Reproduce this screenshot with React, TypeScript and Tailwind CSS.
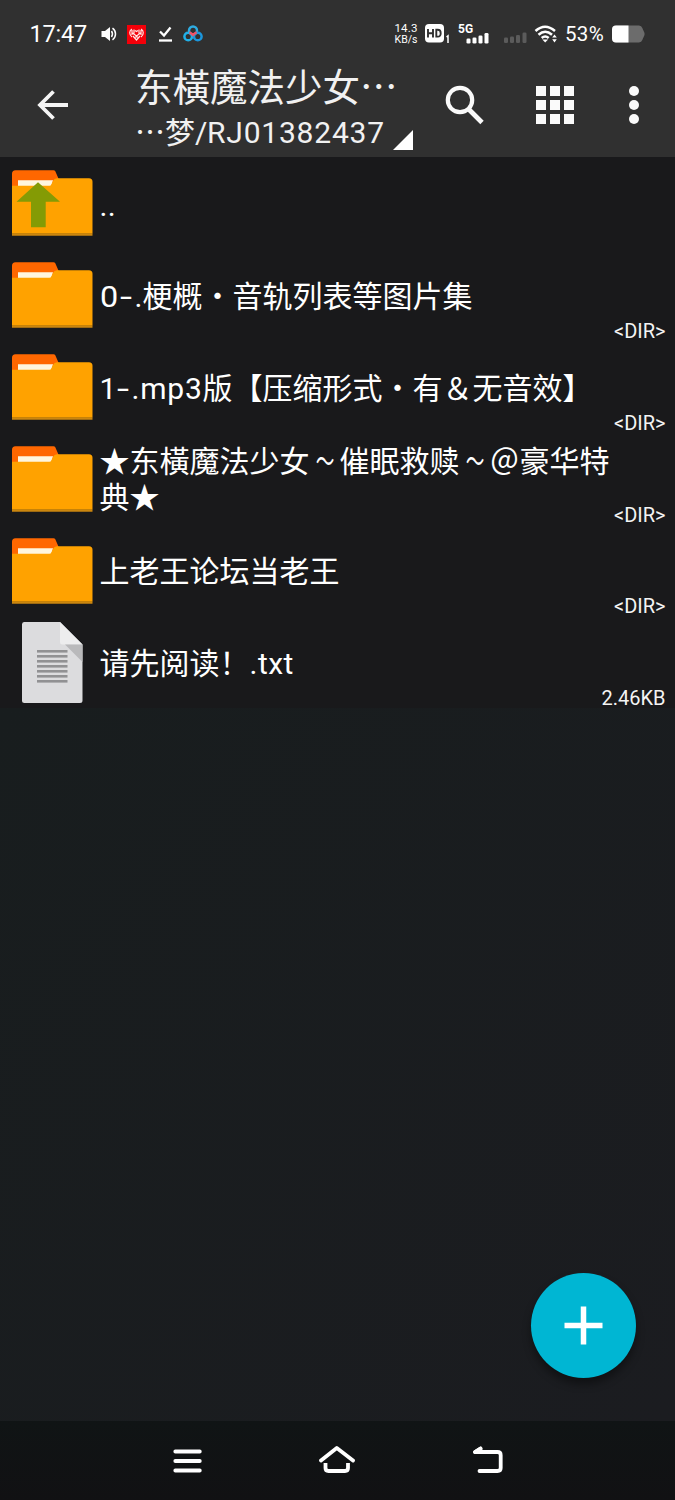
import React from "react";

type Segment = { text: string; className?: string };
type Entry = { lines: Segment[][]; icon: "up" | "folder" | "file"; info?: string; textClass?: string };

const latin = "font-['Roboto','Noto_Sans_CJK_SC',sans-serif]";

const entries: Entry[] = [
  { icon: "up", textClass: "pt-[4px]", lines: [[{ text: "..", className: `${latin} tracking-[0.3px]` }]] },
  {
    icon: "folder",
    info: "<DIR>",
    textClass: "pt-px",
    lines: [[
      { text: "0", className: `${latin} inline-block w-[20px] scale-x-[1.08] origin-left` },
      { text: "-", className: `${latin} inline-block w-[15px] scale-x-[1.45] origin-left` },
      { text: ".", className: `${latin} inline-block w-[8px]` },
      { text: "梗概・音轨列表等图片集" },
    ]],
  },
  {
    icon: "folder",
    info: "<DIR>",
    textClass: "pt-px",
    lines: [[
      { text: "1", className: `${latin} inline-block w-[17px]` },
      { text: "-", className: `${latin} inline-block w-[15px] scale-x-[1.45] origin-left` },
      { text: ".mp3", className: `${latin} inline-block w-[71px] tracking-[0.8px]` },
      { text: "版【压缩形式・有＆无音效】" },
    ]],
  },
  {
    icon: "folder",
    info: "<DIR>",
    textClass: "pb-[3px]",
    lines: [
      [
        { text: "★东橫魔法少女" },
        { text: "～", className: "inline-block scale-x-[0.62]" },
        { text: "催眠救赎" },
        { text: "～", className: "inline-block scale-x-[0.62]" },
        { text: "＠豪华特" },
      ],
      [{ text: "典★" }],
    ],
  },
  { icon: "folder", info: "<DIR>", textClass: "pb-[4px]", lines: [[{ text: "上老王论坛当老王" }]] },
  {
    icon: "file",
    info: "2.46KB",
    textClass: "pb-0",
    lines: [[{ text: "请先阅读！" }, { text: ".txt", className: `${latin} tracking-[0.5px]` }]],
  },
];

function FolderIcon({ up }: { up?: boolean }) {
  return (
    <svg width="81" height="81" viewBox="0 -0.700 81 81" className="block">
      <path d="M0 11a3.500 3.500 0 0 1 3.500-3.500H41.500a2 2 0 0 1 1.800 1.100L47 17v12H0z" fill="#ff6700" />
      <path d="M6 17.500H41l-1.800 6H6z" fill="#fff6de" />
      <path d="M0 23H37.500a2 2 0 0 0 1.800-1.200L41 18.200a4.500 4.500 0 0 1 4.100-2.700H77a3.500 3.500 0 0 1 3.500 3.500V71H0z" fill="#ffa200" />
      <path d="M0 71H80.500v2H0z" fill="#cb860f" />
      {up && <path d="M26 19.500 48 39H33.700V64.500H19V39H4.500z" fill="#849b05" />}
    </svg>
  );
}

function FileIcon() {
  return (
    <svg width="81" height="81" viewBox="0 0 81 81" className="block">
      <path d="M12 0H48L70.500 22.500V78.500a2.500 2.500 0 0 1-2.500 2.500H12.500a2.500 2.500 0 0 1-2.500-2.500V2.500A2.500 2.500 0 0 1 12 0z" fill="#dcdcde" />
      <path d="M48 0 70.500 22.500H50.500A2.500 2.500 0 0 1 48 20z" fill="#ededee" />
      <path d="M53 22.500H70.500V40z" fill="#b9b9bb" />
      {[28, 33, 38, 43, 48, 53, 58].map((y) => (
        <path key={y} d={`M25 ${y}H55.500v2.600H25z`} fill="#919193" />
      ))}
    </svg>
  );
}

function Row({ entry }: { entry: Entry }) {
  return (
    <li className="flex h-[91.9px] items-center pl-3 pr-[9.500px]">
      {entry.icon === "file" ? <FileIcon /> : <FolderIcon up={entry.icon === "up"} />}
      <div className={`ml-[6.500px] w-[515px] shrink-0 whitespace-nowrap text-[30px] leading-9 text-white ${entry.textClass ?? ""}`}>
        {entry.lines.map((line, i) => (
          <div key={i}>
            {line.map((s, j) => (
              <span key={j} className={s.className}>{s.text}</span>
            ))}
          </div>
        ))}
      </div>
      {entry.info && (
        <span className={`${latin} -mb-[2px] -ml-10 flex-1 self-end text-right text-[20px] leading-6 text-[#f4f4f4]`}>
          {entry.info}
        </span>
      )}
    </li>
  );
}

function StatusBar() {
  return (
    <div className={`${latin} flex h-[53px] items-center pl-[29.500px] pr-[30px] pt-[15px] text-white`}>
      <span className="w-[58px] text-[23.500px] leading-6 tracking-[-0.2px]">17:47</span>
      <svg width="16" height="16" viewBox="0 0 16 16" className="ml-[13.500px]">
        <path d="M.5 5h3.500l5-4v14l-5-4H.5z" fill="#fff" />
        <path d="M10.500 5q2 3 0 6M11.500 2.200c4 3 4 8.600 0 11.600" fill="none" stroke="#fff" strokeWidth="1.500" />
      </svg>
      <svg width="19" height="19" viewBox="0 0 19 19" className="ml-[10px]">
        <path d="M0 0h19v19H0z" fill="#f40009" />
        <path d="M5 4C2 5.500 2 10 5 12M14 4c3 1.500 3 6 0 8M7 4.500v4M12 4.500v4M5.500 8l4 3 4-3M6 11l3.500 4 3.500-4M8 5.500l1.500 1L11 5.500M5 5v5M14 5v5M8 12h3" fill="none" stroke="#ffe8e6" strokeWidth="1.200" />
      </svg>
      <svg width="15" height="17" viewBox="0 0 15 17" className="ml-[11.500px]">
        <path d="m2 5.500 4 4 6.500-8" fill="none" stroke="#fff" strokeWidth="2.300" />
        <path d="M1 14.500h13" stroke="#fff" strokeWidth="2.300" />
      </svg>
      <svg width="20" height="18" viewBox="0 0 20 18" className="ml-[10px]" fill="none" strokeWidth="2.500">
        <circle cx="10" cy="5.500" r="4" stroke="#2eabe0" />
        <circle cx="5.200" cy="11.500" r="3.800" stroke="#20b0e8" />
        <circle cx="14.800" cy="11.500" r="3.800" stroke="#1b96dc" />
        <path d="M6.300 7.500c1.700.3 2.500 1.200 3.700 2.500 1.200-1.300 2-2.200 3.700-2.500" stroke="#ef5266" />
      </svg>
      <div className="ml-auto w-[24px] text-center text-[10.500px] leading-[11px]">
        <div className="text-[11.500px] tracking-[0.2px]">14.3</div>
        <div>KB/s</div>
      </div>
      <svg width="25" height="22" viewBox="0 0 25 22" className="ml-[7px]">
        <rect x="0" y="1" width="19" height="18.500" rx="4" fill="#fff" />
        <path d="M3 6v8.500M8 6v8.500M3 10.200h5M11.300 6.800h1.500q2.900 0 2.900 3.400t-2.900 3.400h-1.500z" fill="none" stroke="#303030" strokeWidth="1.900" />
        <path d="m21.500 14 1.500-1.200V20" fill="none" stroke="#fff" strokeWidth="1.500" />
      </svg>
      <div className="ml-[8px] flex h-[21px] w-[31px] flex-col">
        <span className="text-[12px] font-bold leading-[11px]">5G</span>
        <svg width="31" height="12" viewBox="0 0 31 12" className="-mt-[3px] shrink-0" fill="#fff">
          <rect x="8.500" y="6.500" width="4" height="5" rx="1.300" />
          <rect x="14.500" y="5.500" width="4" height="6" rx="1.300" />
          <rect x="20.500" y="3.500" width="4" height="8" rx="1.300" />
          <rect x="26.500" y="1" width="4" height="10.500" rx="1.300" />
        </svg>
      </div>
      <svg width="23" height="21" viewBox="0 0 23 21" className="ml-[15px]" fill="#5b5b5b">
        <rect x="0" y="13.500" width="4" height="5.500" rx="1.300" />
        <rect x="6" y="12.500" width="4" height="6.500" rx="1.300" />
        <rect x="12" y="11" width="4" height="8" rx="1.300" />
        <rect x="18.500" y="8.500" width="4" height="10.500" rx="1.300" />
      </svg>
      <svg width="24" height="20" viewBox="0 0 24 20" className="ml-[7px]">
        <path d="M1.500 7q9.500-8.500 19.500 0M4.500 10.700q6.700-6 13.500 0M7.700 14q3.500-3 7 0" fill="none" stroke="#fff" strokeWidth="2.500" />
        <path d="M8.300 15.500h5.800l-2.900 3z" fill="#fff" />
        <path d="m20.500 10.500 2.300 3h-4.600zM18.200 15.200h4.600l-2.300 3.300z" fill="#fff" />
      </svg>
      <span className="ml-[7px] w-[41px] text-[20.500px] leading-6 tracking-[0.3px]">53%</span>
      <svg width="34" height="18" viewBox="0 0 34 18" className="ml-[5px]">
        <path d="M5 .5H28a3.500 3.500 0 0 1 3.300 2.500L33.500 8v2l-2.200 5A3.500 3.500 0 0 1 28 17.500H5A4 4 0 0 1 1 13.500v-9A4 4 0 0 1 5 .5z" fill="#6c6c6c" />
        <path d="M5 .5H17.500v17H5a4 4 0 0 1-4-4v-9a4 4 0 0 1 4-4z" fill="#fff" />
      </svg>
    </div>
  );
}

function Toolbar() {
  return (
    <div className="flex h-[104px] items-center text-[#f1f1f1]">
      <svg width="32" height="32" viewBox="0 0 32 32" className="ml-[36.500px]" fill="none" stroke="#f5f5f5" strokeWidth="3.800">
        <path d="M31 16H3M16.500 2.500 3 16l13.500 13.500" />
      </svg>
      <div className="ml-[66.500px] w-[280px] self-start whitespace-nowrap pt-[9px]">
        <div className="text-[37.500px] leading-[46px]">东橫魔法少女…</div>
        <div className="flex h-[46px] items-center text-[30px] leading-[44px]">
          <span className="-mt-[3px]">…梦</span>
          <span className={`${latin} mt-[3px] inline-block w-[12px]`}>/</span>
          <span className={`${latin} mt-[3px] inline-block w-[178px] tracking-[0.800px]`}>RJ01382437</span>
          <svg width="20" height="20" viewBox="0 0 20 20" className="ml-[7.500px] mt-[18px]">
            <path d="M20 0v20H0z" fill="#fff" />
          </svg>
        </div>
      </div>
      <svg width="40" height="40" viewBox="0 0 40 40" className="ml-[30px]" fill="none" stroke="#fafafa">
        <circle cx="15" cy="15" r="12.200" strokeWidth="4.200" />
        <path d="m24 24.500 13 13" strokeWidth="4.700" />
      </svg>
      <svg width="38" height="38" viewBox="0 0 38 38" className="ml-[51px]" fill="#fafafa">
        {[0, 14, 28].map((y) => [0, 14, 28].map((x) => <rect key={`${x}-${y}`} x={x} y={y} width="10" height="10" />))}
      </svg>
      <svg width="10" height="38" viewBox="0 0 10 38" className="ml-[55px]" fill="#fafafa">
        <circle cx="5" cy="5" r="5" />
        <circle cx="5" cy="19" r="5" />
        <circle cx="5" cy="33" r="5" />
      </svg>
    </div>
  );
}

export default function App() {
  return (
    <div className="flex h-[1500px] w-[675px] flex-col overflow-hidden bg-[#191d1e] font-['Noto_Sans_CJK_SC',sans-serif]">
      <header className="h-[157px] shrink-0 bg-[#303030]">
        <StatusBar />
        <Toolbar />
      </header>
      <ul className="shrink-0 bg-[#19191b]">
        {entries.map((e, i) => <Row key={i} entry={e} />)}
      </ul>
      <main className="flex flex-1 items-end justify-end bg-linear-to-br from-[#181d1e] to-[#1b1c20] pb-[43px] pr-[39.500px]">
        <button className="flex size-[105px] items-center justify-center rounded-full bg-[#00b6d3] shadow-[0_6px_9px_rgba(0,0,0,0.4)]">
          <svg width="39" height="39" viewBox="0 0 39 39">
            <path d="M19.500 .5v38M.5 19.500h38" stroke="#fff" strokeWidth="5.500" />
          </svg>
        </button>
      </main>
      <nav className="flex h-[79px] shrink-0 items-center bg-linear-to-b from-[#101415] to-[#111113] pl-[173px]">
        <svg width="29" height="26" viewBox="0 0 29 26" fill="none" stroke="#fff" strokeWidth="3.800" strokeLinecap="round">
          <path d="M2.300 3.500h24.500M2.300 13h24.500M2.300 22.500h24.500" />
        </svg>
        <svg width="36" height="28" viewBox="0 0 36 28" className="ml-[117px] -mt-[4px]" fill="none" stroke="#fff" strokeWidth="3.800" strokeLinecap="round" strokeLinejoin="round">
          <path d="M2 15.500 17.800 3 34 15.500" />
          <path d="M6.500 18v5q0 3 3 3h16.500q3 0 3-3v-5" strokeLinecap="butt" />
        </svg>
        <svg width="32" height="28" viewBox="0 0 32 28" className="ml-[116.500px] -mt-[4px]" fill="none" stroke="#fff" strokeWidth="3.800" strokeLinecap="round" strokeLinejoin="round">
          <path d="M8.500 3.500 3 7h22.500q3.200 0 3.200 3.200V23q0 3-3.200 3H7.500" />
          <path d="M3 7 8.500 3.500v3z" fill="#fff" />
        </svg>
      </nav>
    </div>
  );
}
